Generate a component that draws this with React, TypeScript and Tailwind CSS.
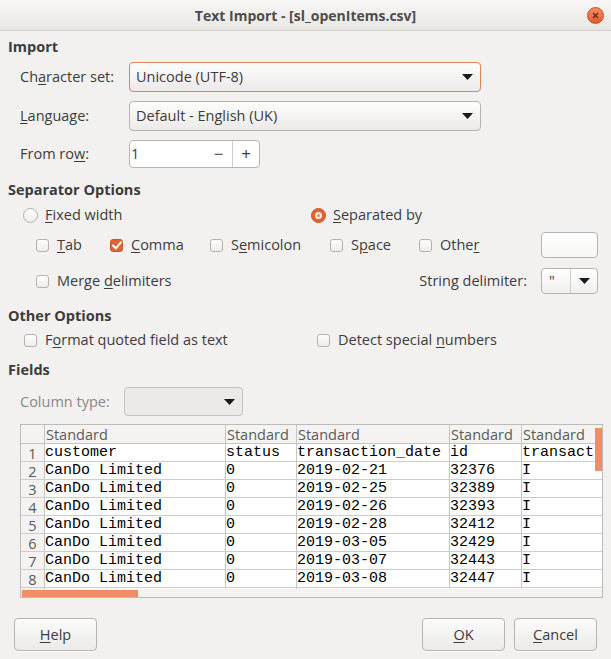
import type { ReactNode } from 'react';

const rows = [
  ['customer', 'status', 'transaction_date', 'id', 'transact'],
  ['CanDo Limited', '0', '2019-02-21', '32376', 'I'],
  ['CanDo Limited', '0', '2019-02-25', '32389', 'I'],
  ['CanDo Limited', '0', '2019-02-26', '32393', 'I'],
  ['CanDo Limited', '0', '2019-02-28', '32412', 'I'],
  ['CanDo Limited', '0', '2019-03-05', '32429', 'I'],
  ['CanDo Limited', '0', '2019-03-07', '32443', 'I'],
  ['CanDo Limited', '0', '2019-03-08', '32447', 'I'],
  ['CanDo Limited', '0', '2019-03-11', '32455', 'I'],
];

const colWidths = ['w-[181px]', 'w-[71px]', 'w-[153px]', 'w-[72px]', 'w-[90px]'];

// label with one underlined mnemonic letter
function Mn({ pre, u, post }: { pre?: string; u: string; post?: string }) {
  return (
    <span>
      {pre}
      <span className="underline underline-offset-2">{u}</span>
      {post}
    </span>
  );
}

function Arrow() {
  return (
    <svg width="11" height="6" viewBox="0 0 11 6">
      <path d="M0 0h11L5.5 6z" fill="#1a1a1a" />
    </svg>
  );
}

function Check({ checked = false, children }: { checked?: boolean; children: ReactNode }) {
  return (
    <div className="flex items-center gap-[8px]">
      {checked ? (
        <div className="w-[13px] h-[13px] rounded-[3px] bg-[#df6536] border border-[#c9562b] flex items-center justify-center">
          <svg width="10" height="9" viewBox="0 0 10 9">
            <path d="M1 4.5l2.7 2.8L9 1.3" stroke="#fff" strokeWidth="2" fill="none" strokeLinecap="round" strokeLinejoin="round" />
          </svg>
        </div>
      ) : (
        <div className="w-[13px] h-[13px] rounded-[3px] border border-[#b3b2b0] bg-gradient-to-b from-[#fdfdfd] to-[#eeedec]" />
      )}
      <span>{children}</span>
    </div>
  );
}

function Radio({ checked = false, children }: { checked?: boolean; children: ReactNode }) {
  return (
    <div className="flex items-center gap-[7px]">
      {checked ? (
        <div className="w-[15px] h-[15px] rounded-full bg-[#df6536] border border-[#c9562b] flex items-center justify-center">
          <div className="w-[7px] h-[7px] rounded-full bg-[#e98a62] border-2 border-[#fbe7dd]" />
        </div>
      ) : (
        <div className="w-[15px] h-[15px] rounded-full border border-[#b3b2b0] bg-gradient-to-b from-[#fdfdfd] to-[#eeedec]" />
      )}
      <span>{children}</span>
    </div>
  );
}

function Combo({ value, focused = false, className = '' }: { value: string; focused?: boolean; className?: string }) {
  return (
    <div
      className={`flex items-center justify-between pl-[6px] pr-[7px] rounded-[4px] border bg-gradient-to-b from-[#fdfdfd] to-[#ebeae8] ${
        focused ? 'border-[#e0835c]' : 'border-[#b5b4b2]'
      } ${className}`}
    >
      <span>{value}</span>
      <Arrow />
    </div>
  );
}

function Button({ children }: { children: ReactNode }) {
  return (
    <div className="w-[83px] h-[33px] flex items-center justify-center rounded-[4px] border border-[#b5b4b2] bg-gradient-to-b from-[#fcfcfc] to-[#eceae8] shadow-[0_1px_0_rgba(255,255,255,0.8)]">
      {children}
    </div>
  );
}

export default function App() {
  return (
    <div className="w-[611px] h-[659px] bg-[#f2f1f0] text-[#3c3c3c] text-[14.5px] font-['Open_Sans',sans-serif] flex flex-col overflow-hidden">
      {/* Title bar */}
      <div className="h-[31px] shrink-0 relative flex items-center justify-center bg-gradient-to-b from-[#f8f7f6] to-[#e9e7e4] border-b border-[#d3d0cc]">
        <span className="font-bold text-[#4c4c4c] text-[14px]">Text Import - [sl_openItems.csv]</span>
        <div className="absolute right-[7px] top-[7px] w-[17px] h-[17px] rounded-full bg-gradient-to-b from-[#f58d62] to-[#e0592a] border border-[#c9502a] flex items-center justify-center">
          <svg width="7" height="7" viewBox="0 0 7 7">
            <path d="M1 1l5 5M6 1L1 6" stroke="#5a2a18" strokeWidth="1.2" />
          </svg>
        </div>
      </div>

      <div className="px-2 flex flex-col">
        {/* Import */}
        <div className="h-[18px] mt-[7px] flex items-center font-bold">Import</div>
        <div className="h-[30px] mt-[6px] flex items-center pl-[12px]">
          <div className="w-[109px]"><Mn pre="Ch" u="a" post="racter set:" /></div>
          <Combo value="Unicode (UTF-8)" focused className="w-[352px] h-[30px]" />
        </div>
        <div className="h-[30px] mt-[9px] flex items-center pl-[12px]">
          <div className="w-[109px]"><Mn u="L" post="anguage:" /></div>
          <Combo value="Default - English (UK)" className="w-[352px] h-[30px]" />
        </div>
        <div className="h-[28px] mt-[9px] flex items-center pl-[12px]">
          <div className="w-[109px]"><Mn pre="From ro" u="w" post=":" /></div>
          <div className="w-[131px] h-[28px] flex items-stretch rounded-[4px] border border-[#b5b4b2] bg-white overflow-hidden">
            <div className="flex-1 flex items-center pl-[1px]">1</div>
            <div className="w-[27px] flex items-center justify-center text-[17px]">−</div>
            <div className="w-[27px] border-l border-[#d0cfcd] flex items-center justify-center text-[17px]">+</div>
          </div>
        </div>

        {/* Separator Options */}
        <div className="h-[18px] mt-[13px] flex items-center font-bold">Separator Options</div>
        <div className="h-[20px] mt-[6px] flex items-center pl-[15px]">
          <div className="w-[288px]"><Radio><Mn u="F" post="ixed width" /></Radio></div>
          <Radio checked><Mn u="S" post="eparated by" /></Radio>
        </div>
        <div className="h-[26px] mt-[7px] flex items-center pl-[28px]">
          <div className="w-[74px]"><Check><Mn u="T" post="ab" /></Check></div>
          <div className="w-[100px]"><Check checked><Mn u="C" post="omma" /></Check></div>
          <div className="w-[120px]"><Check><Mn pre="S" u="e" post="micolon" /></Check></div>
          <div className="w-[89px]"><Check><Mn pre="S" u="p" post="ace" /></Check></div>
          <div className="w-[122px]"><Check><Mn pre="Othe" u="r" /></Check></div>
          <div className="w-[57px] h-[26px] rounded-[4px] border border-[#b5b4b2] bg-gradient-to-b from-[#ffffff] to-[#f6f6f5]" />
        </div>
        <div className="h-[26px] mt-[10px] flex items-center pl-[28px] pr-[5px]">
          <div className="flex-1"><Check><Mn pre="Merge " u="d" post="elimiters" /></Check></div>
          <div className="mr-[14px]"><Mn pre="Strin" u="g" post=" delimiter:" /></div>
          <div className="w-[57px] h-[26px] flex rounded-[4px] border border-[#b5b4b2] bg-gradient-to-b from-[#ffffff] to-[#f0efee]">
            <div className="w-[29px] border-r border-[#d0cfcd] flex items-center pl-[7px]">"</div>
            <div className="flex-1 flex items-center justify-center"><Arrow /></div>
          </div>
        </div>

        {/* Other Options */}
        <div className="h-[18px] mt-[13px] flex items-center font-bold">Other Options</div>
        <div className="h-[20px] mt-[5px] flex items-center pl-[16px]">
          <div className="w-[293px]"><Check><Mn pre="F" u="o" post="rmat quoted field as text" /></Check></div>
          <Check><Mn pre="Detect special " u="n" post="umbers" /></Check>
        </div>

        {/* Fields */}
        <div className="h-[18px] mt-[11px] flex items-center font-bold">Fields</div>
        <div className="h-[29px] mt-[8px] flex items-center pl-[12px]">
          <div className="w-[104px] text-[#8a8886]">Column type:</div>
          <div className="w-[119px] h-[29px] flex items-center justify-end pr-[7px] rounded-[4px] border border-[#c4c3c1] bg-[#eceae8]">
            <Arrow />
          </div>
        </div>

        {/* Preview grid */}
        <div className="relative mt-[8px] ml-[12px] w-[583px] h-[174px] border border-[#bdbbb8] bg-[#f4f3f2] flex flex-col">
          <div className="h-[164px] overflow-hidden">
            <div className="flex h-[19px] border-b border-[#c8c6c3] text-[#5a5a5a]">
              <div className="w-[24px] shrink-0 border-r border-[#c8c6c3]" />
              {colWidths.map((w, i) => (
                <div key={i} className={`${w} shrink-0 border-r border-[#c8c6c3] pl-[1px] leading-[19px]`}>
                  Standard
                </div>
              ))}
            </div>
            {rows.map((r, ri) => (
              <div key={ri} className="flex h-[18px] border-b border-[#cfcdca]">
                <div className="w-[24px] shrink-0 border-r border-[#c8c6c3] text-[#5a5a5a] text-center leading-[20px]">
                  {ri + 1}
                </div>
                {r.map((c, ci) => (
                  <div
                    key={ci}
                    className={`${colWidths[ci]} shrink-0 bg-white border-r border-[#c8c6c3] font-['Liberation_Mono',monospace] text-[15px] leading-[17px] text-black whitespace-nowrap overflow-hidden`}
                  >
                    {c}
                  </div>
                ))}
              </div>
            ))}
          </div>
          {/* horizontal scroll track */}
          <div className="h-[8px] pl-[1px] pt-[1px]">
            <div className="w-[116px] h-[7px] bg-[#f08c66]" />
          </div>
          {/* overlay vertical scrollbar */}
          <div className="absolute right-0 top-[3px] w-[7px] h-[43px] bg-[#f08c66]" />
        </div>
      </div>

      {/* Buttons */}
      <div className="mt-[20px] flex items-center px-[14px]">
        <Button><Mn u="H" post="elp" /></Button>
        <div className="flex-1" />
        <Button><Mn u="O" post="K" /></Button>
        <div className="w-[9px]" />
        <Button><Mn u="C" post="ancel" /></Button>
      </div>
    </div>
  );
}
